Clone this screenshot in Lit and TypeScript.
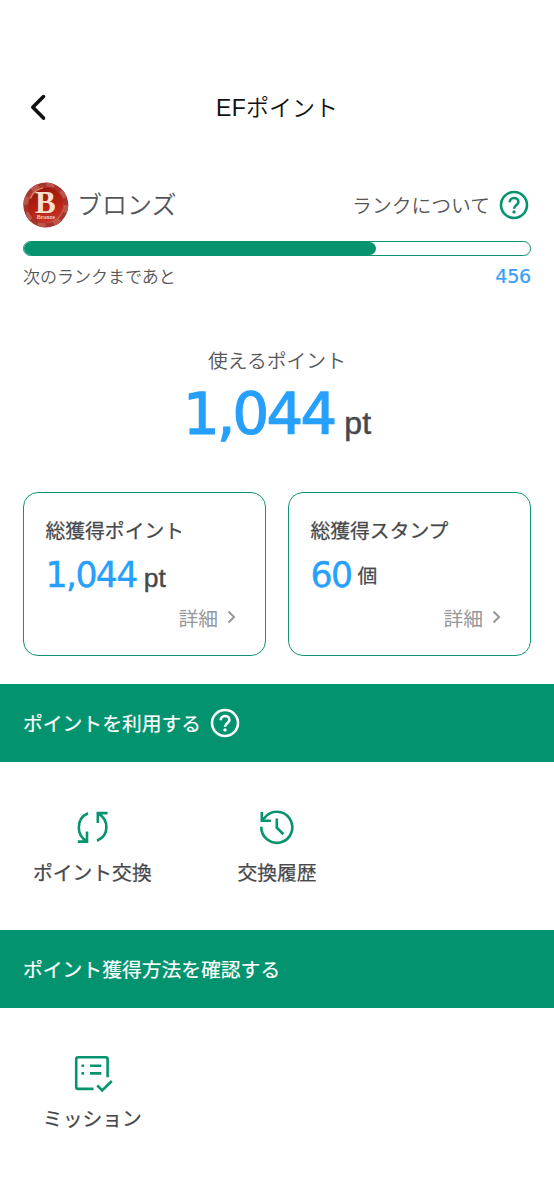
import { LitElement, html, css, svg } from "lit";
import { customElement, property } from "lit/decorators.js";

@customElement("help-icon")
class HelpIcon extends LitElement {
  static styles = css`
    :host { display: block; width: 30px; height: 30px; }
    svg { display: block; }
  `;
  render() {
    return html`<svg width="30" height="30" viewBox="0 0 30 30" fill="none" stroke="currentColor" stroke-width="2.6">
      <circle cx="15" cy="15" r="13"></circle>
      <path d="M10.7 12.3C10.7 9.6 12.5 8 15 8s4.4 1.6 4.4 3.9c0 3.3-4.4 3.5-4.4 6.9"></path>
      <circle cx="15" cy="21.9" r="1.7" fill="currentColor" stroke="none"></circle>
    </svg>`;
  }
}

@customElement("rank-medal")
class RankMedal extends LitElement {
  static styles = css`
    :host { display: block; width: 46px; height: 46px; }
    svg { display: block; }
    .initial { font: 700 31px "Liberation Serif", serif; fill: #f5dfce; }
    .caption { font: 700 6px "Liberation Serif", serif; fill: #f0d2bd; }
  `;
  render() {
    return html`<svg width="46" height="46" viewBox="0 0 46 46">
      <defs>
        <linearGradient id="face" x1=".3" y1="0" x2=".6" y2="1">
          <stop offset="0" stop-color="#94170f"></stop>
          <stop offset=".5" stop-color="#b3200f"></stop>
          <stop offset="1" stop-color="#c9362a"></stop>
        </linearGradient>
        <linearGradient id="rim" x1="0" y1="0" x2="1" y2="1">
          <stop offset="0" stop-color="#e08a62"></stop>
          <stop offset=".3" stop-color="#a3221b"></stop>
          <stop offset=".7" stop-color="#b32a20"></stop>
          <stop offset="1" stop-color="#eda080"></stop>
        </linearGradient>
      </defs>
      <circle cx="22.8" cy="23" r="22.5" fill="#a6342d"></circle>
      <circle cx="22.8" cy="23" r="20.2" fill="none" stroke="#bb564d" stroke-width="4.6" stroke-dasharray="7.9 7.97"></circle>
      <circle cx="22.8" cy="23" r="17.8" fill="url(#face)" stroke="url(#rim)" stroke-width="1.2"></circle>
      <path d="M7.5 16.5A17 17 0 0 1 20 6" fill="none" stroke="#e59a70" stroke-width="1.1"></path>
      <text text-anchor="middle"><tspan class="initial" x="22.4" y="31.4">B</tspan><tspan class="caption" x="22.8" y="37.4">Bronze</tspan></text>
    </svg>`;
  }
}

@customElement("total-card")
class TotalCard extends LitElement {
  @property() label = "";
  @property() value = "";
  @property() unit = "";
  static styles = css`
    :host {
      display: flex; flex-direction: column; box-sizing: border-box; height: 163.5px;
      border: 1.5px solid #109573; border-radius: 15px; padding: 22px 29px 0 21.5px;
      color: #47484b; font-size: 19.8px; -webkit-text-stroke: .25px currentColor;
    }
    .label { line-height: 30px; white-space: nowrap; }
    .amount { display: flex; align-items: baseline; height: 44px; margin-top: 8px; line-height: 44px; }
    .value { color: #26a0fc; font-family: "DejaVu Sans", sans-serif; font-size: 34.7px; letter-spacing: -1.6px; -webkit-text-stroke: .4px currentColor; }
    .counter { align-self: center; margin-left: 6px; }
    .latin { margin-left: 7px; font-family: "Liberation Sans", sans-serif; font-size: 26.5px; line-height: 30px; -webkit-text-stroke: .4px currentColor; }
    .more { display: flex; align-items: center; justify-content: flex-end; gap: 9px; height: 30px; margin-top: 5px; color: #96979a; -webkit-text-stroke: 0; }
  `;
  render() {
    return html`
      <div class="label">${this.label}</div>
      <div class="amount"><span class="value">${this.value}</span><span class=${this.unit === "pt" ? "latin" : "counter"}>${this.unit}</span></div>
      <div class="more"><span>詳細</span>
        <svg width="9" height="14" viewBox="0 0 9 14" fill="none" stroke="currentColor" stroke-width="2"><path d="M1.5 1.5 7 7l-5.5 5.5"></path></svg>
      </div>`;
  }
}

const exchangeIcon = svg`<path d="M16 5.2C9.6 8 6.8 13.6 6.8 19.4c0 6 3 11 8 13.6M5.8 33.6H15V23.4"></path><path d="M25 32.8c6.4-2.8 9.4-7.6 9.4-13.2 0-6-3-11.2-8-14M35.6 5.1H25.8V15"></path>`;
const historyIcon = svg`<path d="M4.3 18.8A15.5 15.5 0 1 0 7.4 10L4.8 12.8"></path><path d="M4.8 4v8.8h9"></path><path d="M19.8 10.6v9.2l6.6 6.5"></path>`;
const missionIcon = svg`<path d="M21.5 34.9H6.2a2 2 0 0 1-2-2V5.3a2 2 0 0 1 2-2h27.4a2 2 0 0 1 2 2v18"></path><path d="M9.5 11.7h2.6M18 11.7h11.3M9.5 19.4h2.6M18 19.4h11.3"></path><path d="m25.2 31.4 5 5 9.6-9.4"></path>`;

@customElement("app-root")
class AppRoot extends LitElement {
  @property({ type: Number }) progress = 69.6;
  static styles = css`
    :host {
      display: block; width: 554px; height: 1200px; overflow: hidden; background: #fff; color: #55565a;
      font-family: "Noto Sans CJK JP", sans-serif; font-size: 19.8px; font-weight: 350;
    }
    .header { display: grid; grid-template-columns: 1fr auto 1fr; align-items: center; height: 40px; padding: 86px 28px 0; color: #111; }
    .back { display: block; }
    .title { font-size: 23px; line-height: 40px; white-space: nowrap; }
    .title .latin { font-family: "Liberation Sans", sans-serif; letter-spacing: .4px; }
    .rank { padding: 56px 23px 0; }
    .rank-row { display: flex; align-items: center; height: 46px; }
    .rank-name { margin-left: 8px; padding-bottom: 3px; font-size: 25px; line-height: 43px; }
    .about { display: flex; align-items: center; gap: 9px; margin: 0 2px 0 auto; }
    .about span { line-height: 28px; }
    .help { color: #06946f; }
    .bar { box-sizing: border-box; height: 15px; margin-top: 13px; border: 1.5px solid #06946f; border-radius: 8px; overflow: hidden; }
    .fill { height: 100%; background: #06946f; border-radius: 0 8px 8px 0; }
    .next { display: flex; justify-content: space-between; align-items: center; height: 24px; margin-top: 7px; font-size: 17px; }
    .left { padding-top: 2px; color: #36a0f8; font-family: "DejaVu Sans", sans-serif; font-size: 19.2px; font-weight: 400; letter-spacing: -.3px; -webkit-text-stroke: .2px currentColor; }
    .usable { margin-top: 58px; text-align: center; line-height: 30px; }
    .balance { display: flex; justify-content: center; align-items: baseline; height: 80px; line-height: 80px; font-weight: 400; }
    .number { color: #26a0fc; font-family: "DejaVu Sans", sans-serif; font-size: 57.6px; letter-spacing: -2.7px; -webkit-text-stroke: 1.3px currentColor; }
    .pt { margin-left: 10px; font-family: "Liberation Sans", sans-serif; font-size: 32px; color: #47484b; -webkit-text-stroke: .5px currentColor; }
    .cards { display: grid; grid-template-columns: 1fr 1fr; gap: 22px; padding: 0 23px; margin-top: 37px; font-weight: 400; }
    .section { display: flex; align-items: center; gap: 9px; height: 78px; padding: 0 23px; background: #03946f; color: #fff; font-weight: 400; -webkit-text-stroke: .2px currentColor; }
    .section span { padding-bottom: 1px; }
    .first { margin-top: 28.5px; }
    .menu { display: grid; grid-template-columns: repeat(3, 184.67px); height: 168px; }
    .item { display: flex; flex-direction: column; align-items: center; padding-top: 46px; color: #47484b; font-weight: 400; -webkit-text-stroke: .25px currentColor; }
    .item svg { overflow: visible; color: #06946f; }
    .item span { margin-top: 9px; line-height: 30px; white-space: nowrap; }
  `;
  item(label: string, icon: unknown) {
    return html`<div class="item"><svg width="40" height="40" viewBox="0 0 40 40" fill="none" stroke="currentColor" stroke-width="2.6">${icon}</svg><span>${label}</span></div>`;
  }
  render() {
    return html`
      <div class="header">
        <svg class="back" width="20" height="28" viewBox="0 0 20 28" fill="none" stroke="#111" stroke-width="3.6" stroke-linecap="round" stroke-linejoin="round"><path d="M15.5 3.6 4.8 14.3l10.7 10.8"></path></svg>
        <div class="title"><span class="latin">EF</span>ポイント</div>
      </div>
      <div class="rank">
        <div class="rank-row">
          <rank-medal></rank-medal><span class="rank-name">ブロンズ</span>
          <div class="about"><span>ランクについて</span><help-icon class="help"></help-icon></div>
        </div>
        <div class="bar"><div class="fill" style="width:${this.progress}%"></div></div>
        <div class="next"><span>次のランクまであと</span><span class="left">456</span></div>
      </div>
      <div class="usable">使えるポイント</div>
      <div class="balance"><span class="number">1,044</span><span class="pt">pt</span></div>
      <div class="cards">
        <total-card label="総獲得ポイント" value="1,044" unit="pt"></total-card>
        <total-card label="総獲得スタンプ" value="60" unit="個"></total-card>
      </div>
      <div class="section first"><span>ポイントを利用する</span><help-icon></help-icon></div>
      <div class="menu">${this.item("ポイント交換", exchangeIcon)}${this.item("交換履歴", historyIcon)}</div>
      <div class="section"><span>ポイント獲得方法を確認する</span></div>
      <div class="menu">${this.item("ミッション", missionIcon)}</div>`;
  }
}
